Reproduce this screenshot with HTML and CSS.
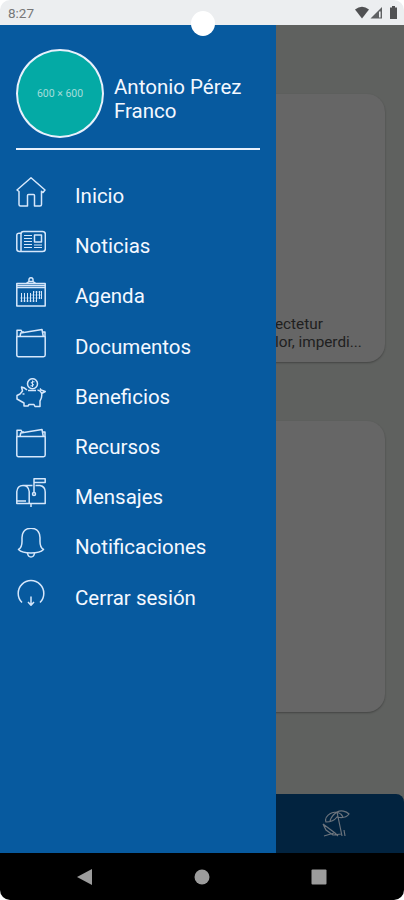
FILE: index.html
```
<!DOCTYPE html>
<html lang="es">
  <head>
    <meta charset="UTF-8" />
    <meta name="viewport" content="width=device-width, initial-scale=1.0" />
    <title>Menú</title>
    <link rel="stylesheet" href="styles.css">
  </head>

  <body>
    <div class="phone">
      <header class="status-bar">
        <span class="clock">8:27</span>
        <svg class="status-icons" width="44" height="14" viewBox="0 0 44 14">
          <path d="M0 3.5Q7-2 14 3.5L7 12.5Z" />
          <path d="M27 1V12.5H15.5Z" opacity="0.9" />
          <path d="M24 5.5h1.6v6H24z" fill="#eceef0" />
          <path d="M35 1.5h2V0h3v1.5h2V13h-7z" />
        </svg>
      </header>
      <div class="camera"></div>

      <main class="screen">
        <section class="page">
          <article class="card card-first">
            <p>ectetur<br />lor, imperdi...</p>
          </article>
          <article class="card card-second"></article>
        </section>
        <div class="tab-bar">
          <svg width="28" height="28" viewBox="0 0 28 28">
            <path d="M4 12C2 7 8 2 15 2C19 0 24 1 27 4C24 8 19 8 15 7C12 11 8 12 4 12ZM8 11C9 7 12 4 15 2C18 3 20 5 21 7M15 2L20 26M1 14L13 23L16 26M1 14L4 20L11 25M2 26L12 23M22 20L23 26M11 25L19 24" />
          </svg>
        </div>

        <nav class="drawer">
          <div class="profile">
            <div class="avatar">600 × 600</div>
            <h1>Antonio Pérez Franco</h1>
          </div>
          <ul class="menu">
            <li>
              <svg viewBox="0 0 30 30">
                <path d="M1 13L15 .8L29 13L27 15.5L25.500 14.200V27.500Q25.500 29 24 29H18.500V18.500Q18.500 17.500 17.500 17.500H12.500Q11.500 17.500 11.500 18.500V29H4.500Q3 29 3 27.500V14.500Z" />
              </svg>
              <span>Inicio</span>
            </li>
            <li>
              <svg viewBox="0 0 30 30">
                <path d="M5 24.5V7Q5 4.5 7.5 4.5H26.5Q29.3 4.5 29.3 7V22Q29.3 24.5 26.5 24.5H3.5Q.8 24.5 .8 22V8Q.8 6 5 6M18.5 8H25.5V15H18.5Z" />
                <path class="fine" d="M8 8.5H16M8 11.5H16M8 14.5H16M8 17.5H16M8 20.5H16M18 18H26M18 20.5H26" />
              </svg>
              <span>Noticias</span>
            </li>
            <li>
              <svg viewBox="0 0 30 30">
                <path d="M.8 6.500H29.200V29H.8ZM1 10.500H29M10 6.500L13 4.500H17L20 6.500M13 4.500Q12.500 .8 15 .8Q17.500 .8 17 4.500" />
                <path d="M1 8.500H29" />
                <path class="fine" d="M5.500 16V25M8.500 16V25M11.500 16V25M14.500 16V25M17.500 14V25M20.500 14V25M23.500 14V22M25.500 14V22" />
                <path class="faint" d="M17 15H26M14 18H26M4 21H26M4 24H20" />
              </svg>
              <span>Agenda</span>
            </li>
            <li>
              <svg viewBox="0 0 30 30">
                <path d="M.8 8.5H29.2V27Q29.2 28.7 27.5 28.7H2.5Q.8 28.7 .8 27ZM1 8.5V2.2H5L6 4H8M4 8.5L4.7 5L26 1.5L27.3 8.5M26.5 4H29V9" />
              </svg>
              <span>Documentos</span>
            </li>
            <li>
              <svg viewBox="0 0 30 30">
                <circle cx="16.5" cy="5.7" r="5" />
                <path class="fine" d="M18.500 3.800H16Q14 4.700 16.500 5.700Q19 6.800 16.500 7.800H14.500M16.500 2.500V9" />
                <path d="M11 12Q8.500 9.500 5.500 9L6.500 13L4 16L1 17.500V21L4.500 23L8 25V28H12L13 26.500H18L19 28.500H24V23Q26.500 19 25.500 15Q24.500 12.500 21.500 12M12 12.500H20M25.500 15.500L29.300 13.500L25 12L24 10.500" />
                <circle cx="7.5" cy="16" r=".3" />
              </svg>
              <span>Beneficios</span>
            </li>
            <li>
              <svg viewBox="0 0 30 30">
                <path d="M.8 8.5H29.2V27Q29.2 28.7 27.5 28.7H2.5Q.8 28.7 .8 27ZM1 8.5V2.2H5L6 4H8M4 8.5L4.7 5L26 1.5L27.3 8.5M26.5 4H29V9" />
              </svg>
              <span>Recursos</span>
            </li>
            <li>
              <svg viewBox="0 0 30 30">
                <path d="M.8 25.5V13.5Q1.5 7.5 7 7.5Q12.5 7.5 13.2 13.5V25.5ZM7 7.5H16.5M19.5 7.5H24Q29.2 8.5 29.2 14V25.5H13.2M1 23H10M15 25.5V29M18 15V.8H29.2V4.5H18" />
                <circle cx="18" cy="16" r="1.5" />
              </svg>
              <span>Mensajes</span>
            </li>
            <li>
              <svg viewBox="0 0 30 30">
                <path d="M2.5 21.5Q6 19.5 6 13.500V9.500Q6.500 .3 15 .3Q23.500 .3 24 9.500V13.500Q24 19.500 27.500 21.500Q24 25 15 25Q6 25 2.500 21.500Z" />
                <path d="M11.500 25Q12 29 15 29Q18 29 18.500 25" />
              </svg>
              <span>Notificaciones</span>
            </li>
            <li>
              <svg viewBox="0 0 30 30">
                <path d="M6 23.5A12.8 12.8 0 1 1 24 23.5M15 17.5V26M12 23L15 26.3L18 23" />
              </svg>
              <span>Cerrar sesión</span>
            </li>
          </ul>
        </nav>
      </main>

      <footer class="nav-bar">
        <svg width="16" height="18" viewBox="0 0 16 18"><path d="M0 9L15 1V17Z" /></svg>
        <svg width="16" height="18" viewBox="0 0 16 18"><circle cx="8" cy="9" r="7.5" /></svg>
        <svg width="16" height="18" viewBox="0 0 16 18"><rect x=".5" y="1.5" width="15" height="15" rx="1" /></svg>
      </footer>
    </div>
  </body>
</html>
```

FILE: styles.css
```
* {
  margin: 0;
  padding: 0;
  box-sizing: border-box;
}

body {
  background-color: white;
  font-family: Roboto, sans-serif;
}

.phone {
  position: relative;
  width: 404px;
  height: 900px;
  display: flex;
  flex-direction: column;
  border-radius: 10px;
  overflow: hidden;
}

.status-bar {
  height: 25px;
  padding: 0 5px 0 8px;
  display: flex;
  align-items: center;
  justify-content: space-between;
  background-color: #eceef0;
}

.clock {
  font-size: 13.5px;
  color: #777;
}

.status-icons {
  fill: #505153;
}

.camera {
  position: absolute;
  top: 11px;
  left: 191px;
  width: 24px;
  height: 25px;
  border-radius: 50%;
  background-color: white;
  z-index: 2;
}

.screen {
  position: relative;
  height: 828px;
  display: flex;
  flex-direction: column;
  background-color: #5f615f;
}

.page {
  flex: 1;
  padding: 69px 19px 0;
}

.card {
  border-radius: 18px;
  background-color: #666;
  box-shadow: 0 1px 2px rgba(0, 0, 0, 0.3);
}

.card-first {
  height: 268px;
  padding: 221px 0 0 256px;
  color: #202020;
  font-size: 15.3px;
  line-height: 18px;
  white-space: nowrap;
}

.card-second {
  height: 291px;
  margin-top: 59px;
}

.tab-bar {
  height: 59px;
  padding-right: 54px;
  display: flex;
  align-items: center;
  justify-content: flex-end;
  border-radius: 8px 8px 0 0;
  background-color: #02233f;
}

.tab-bar svg {
  fill: none;
  stroke: #6b737c;
  stroke-width: 1.2;
}

.drawer {
  position: absolute;
  top: 0;
  left: 0;
  width: 275.5px;
  height: 100%;
  padding: 24px 15.5px 0 16px;
  background-color: #075a9f;
  color: #f4f8ff;
}

.profile {
  height: 101px;
  display: flex;
  align-items: flex-start;
  gap: 10px;
  border-bottom: 2px solid #e8f0fc;
}

.avatar {
  width: 88px;
  height: 89px;
  display: flex;
  align-items: center;
  justify-content: center;
  flex-shrink: 0;
  border: 2px solid #e8f0fc;
  border-radius: 50%;
  background-color: #04aaa5;
  color: #a5dddb;
  font-size: 10.5px;
}

.profile h1 {
  padding-top: 26px;
  font-size: 20.5px;
  font-weight: 400;
  line-height: 24px;
}

.menu {
  padding-top: 22px;
  list-style: none;
}

.menu li {
  height: 50.2px;
  padding-top: 5px;
  display: flex;
  align-items: flex-start;
  gap: 29px;
  font-size: 20.5px;
  line-height: 24px;
}

.menu span {
  padding-top: 7px;
}

.menu svg {
  width: 30px;
  height: 30px;
  fill: none;
  stroke: #d6e7fb;
  stroke-width: 1.5;
  stroke-linejoin: round;
}

.menu .fine {
  stroke-width: 1;
}

.menu .faint {
  stroke-width: 1;
  opacity: 0.5;
}

.nav-bar {
  height: 47px;
  display: flex;
  align-items: center;
  justify-content: center;
  gap: 101px;
  background-color: black;
}

.nav-bar svg {
  fill: #9c9c9c;
}
```
